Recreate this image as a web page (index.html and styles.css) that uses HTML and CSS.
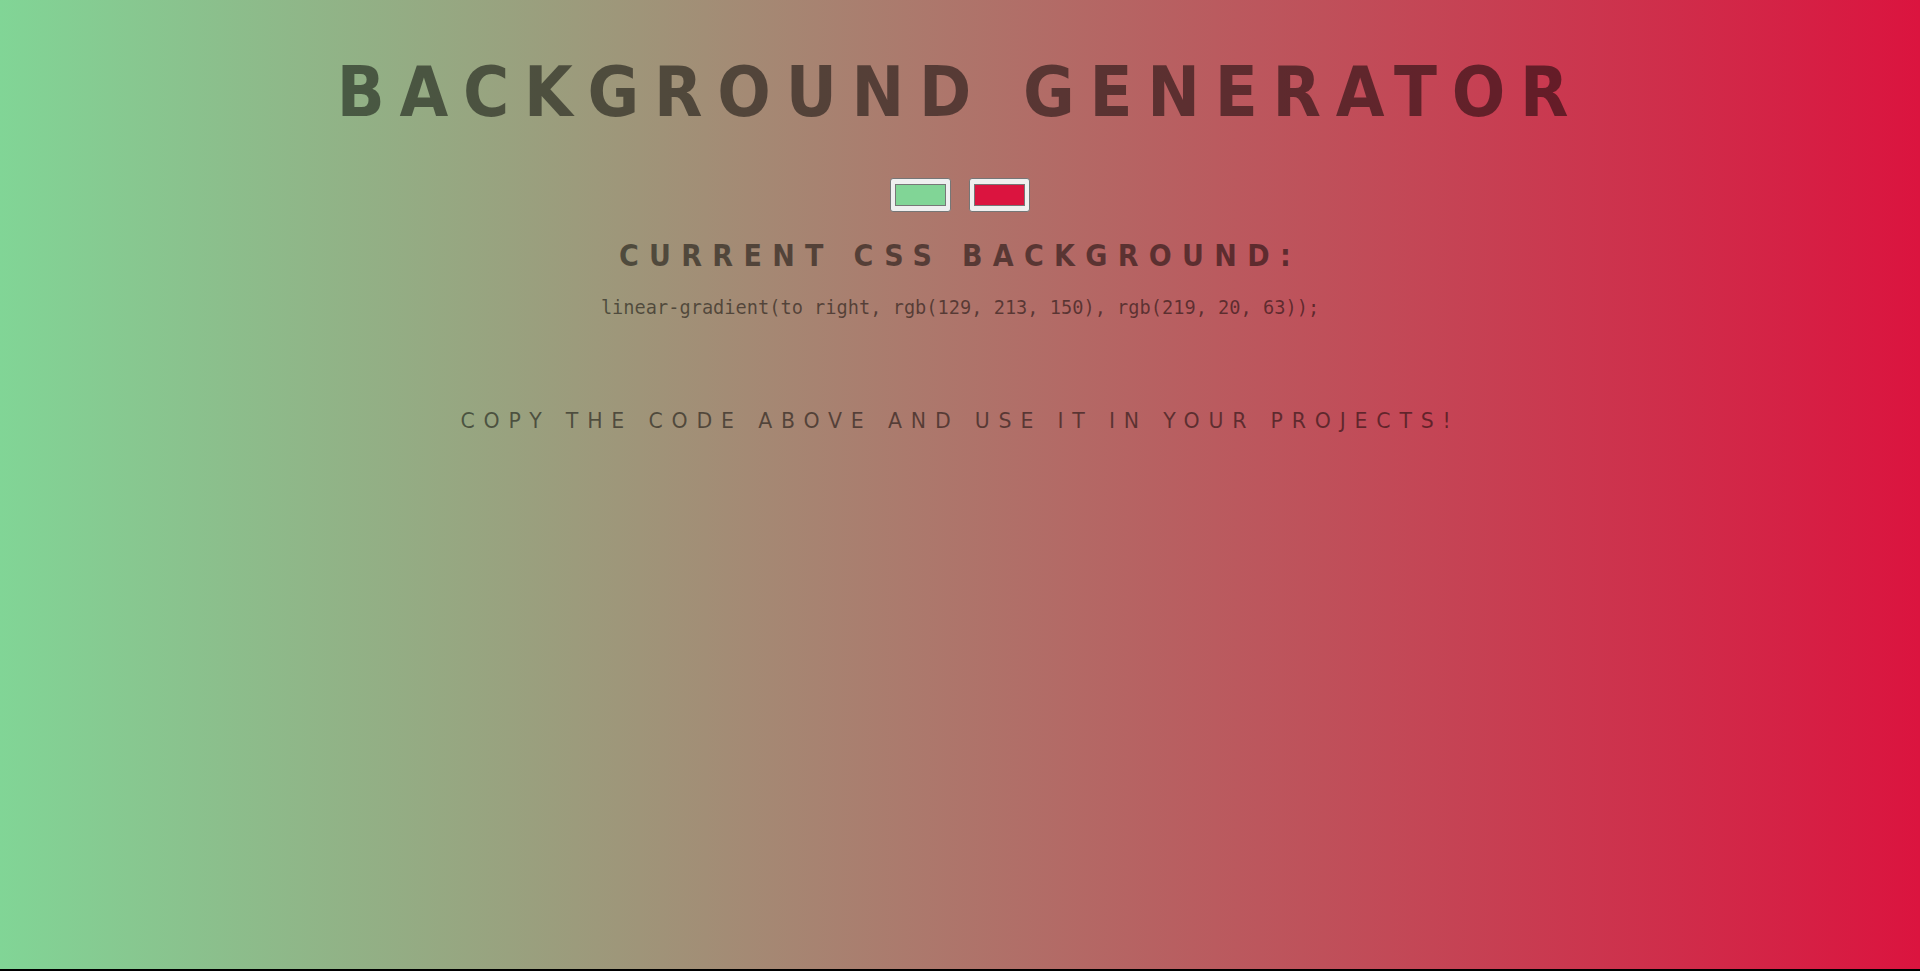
FILE: index.html
```html
<!DOCTYPE html>
<html lang="en">
<head>
<meta charset="utf-8">
<title>Background Generator</title>
<link rel="stylesheet" href="styles.css">
</head>
<body>
  <h1 class="title">Background Generator</h1>
  <div class="pickers">
    <input class="color" type="color" name="color1" value="#81d596">
    <input class="color" type="color" name="color2" value="#db143f">
  </div>
  <h2 class="current">Current CSS Background:</h2>
  <p class="code">linear-gradient(to right, rgb(129, 213, 150), rgb(219, 20, 63));</p>
  <p class="hint">Copy the code above and use it in your projects!</p>
</body>
</html>
```
FILE: styles.css
```css
html {
  background: #000;
  margin: 0;
  padding: 0;
}
body {
  margin: 0;
  height: 969px;
  background: linear-gradient(to right, rgb(129, 213, 150), rgb(219, 20, 63));
  color: rgba(0, 0, 0, 0.5);
  text-align: center;
  font-family: "DejaVu Sans", sans-serif;
  overflow: hidden;
}
.title {
  margin: 57px 0 0;
  font-size: 70px;
  line-height: 70px;
  font-weight: bold;
  font-stretch: condensed;
  text-transform: uppercase;
  letter-spacing: 14.8px;
}
.pickers {
  margin-top: 51px;
  display: flex;
  justify-content: center;
  gap: 18px;
  height: 34px;
}
.color {
  -webkit-appearance: none;
  appearance: none;
  width: 61px;
  height: 34px;
  box-sizing: border-box;
  margin: 0;
  padding: 5px 4px;
  border: 1px solid #767676;
  border-radius: 3px;
  background: #efefef;
}
.color::-webkit-color-swatch-wrapper {
  padding: 0;
}
.color::-webkit-color-swatch {
  border: 1px solid #777;
  border-radius: 0;
}
.current {
  margin: 29px 0 0;
  font-size: 30px;
  line-height: 30px;
  font-weight: bold;
  font-stretch: condensed;
  text-transform: uppercase;
  letter-spacing: 10.3px;
}
.code {
  margin: 28px 0 0;
  font-family: "DejaVu Sans Mono", monospace;
  font-size: 18.65px;
  line-height: 18.5px;
}
.hint {
  margin: 93px 0 0;
  font-size: 20.5px;
  line-height: 20.5px;
  font-weight: normal;
  text-transform: uppercase;
  letter-spacing: 8.8px;
}
```
